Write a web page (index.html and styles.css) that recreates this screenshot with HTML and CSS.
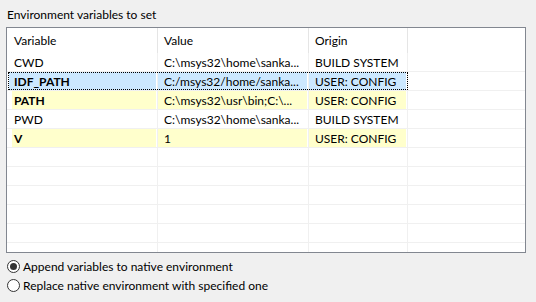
FILE: index.html
```html
<!DOCTYPE html>
<html lang="en">
<head>
    <meta charset="UTF-8">
    <title>Environment</title>
    <link rel="stylesheet" href="styles.css">
</head>
<body>
    <div class="panel">
        <div class="caption">Environment variables to set</div>
        <div class="env-table">
            <div class="row head">
                <div class="cell">Variable</div>
                <div class="cell">Value</div>
                <div class="cell">Origin</div>
                <div class="cell"></div>
            </div>
            <div class="row">
                <div class="cell">CWD</div>
                <div class="cell">C:\msys32\home\sanka...</div>
                <div class="cell">BUILD SYSTEM</div>
                <div class="cell"></div>
            </div>
            <div class="row sel">
                <div class="cell name">IDF_PATH</div>
                <div class="cell">C:/msys32/home/sanka...</div>
                <div class="cell">USER: CONFIG</div>
                <div class="cell"></div>
                <div class="focus"></div>
            </div>
            <div class="row user">
                <div class="cell name">PATH</div>
                <div class="cell">C:\msys32\usr\bin;C:\...</div>
                <div class="cell">USER: CONFIG</div>
                <div class="cell"></div>
            </div>
            <div class="row">
                <div class="cell">PWD</div>
                <div class="cell">C:\msys32\home\sanka...</div>
                <div class="cell">BUILD SYSTEM</div>
                <div class="cell"></div>
            </div>
            <div class="row user">
                <div class="cell name">V</div>
                <div class="cell">1</div>
                <div class="cell">USER: CONFIG</div>
                <div class="cell"></div>
            </div>
            <div class="row"><div class="cell"></div><div class="cell"></div><div class="cell"></div><div class="cell"></div></div>
            <div class="row"><div class="cell"></div><div class="cell"></div><div class="cell"></div><div class="cell"></div></div>
            <div class="row"><div class="cell"></div><div class="cell"></div><div class="cell"></div><div class="cell"></div></div>
            <div class="row"><div class="cell"></div><div class="cell"></div><div class="cell"></div><div class="cell"></div></div>
            <div class="row"><div class="cell"></div><div class="cell"></div><div class="cell"></div><div class="cell"></div></div>
            <div class="row"><div class="cell"></div><div class="cell"></div><div class="cell"></div><div class="cell"></div></div>
        </div>
        <div class="options">
            <label class="radio"><span class="mark checked"></span>Append variables to native environment</label>
            <label class="radio"><span class="mark"></span>Replace native environment with specified one</label>
        </div>
    </div>
</body>
</html>
```

FILE: styles.css
```css
* {
    margin: 0;
    padding: 0;
    box-sizing: border-box;
}

body {
    font-family: 'Lato', 'Noto Sans', sans-serif;
    font-size: 12px;
    background-color: #f0f0f0;
    color: #000;
}

.panel {
    padding: 0 10px 0 6px;
}

.caption {
    padding: 6px 0 0 1px;
    height: 27px;
    line-height: 18px;
}

.env-table {
    border: 1px solid #828790;
    background-color: #fff;
    height: 226px;
    overflow: hidden;
}

.row {
    position: relative;
    display: grid;
    grid-template-columns: 151px 151px 99px 1fr;
    height: 19px;
    border-bottom: 1px solid #f0f0f0;
}

.row.head {
    height: 25px;
    border-bottom: none;
}

.cell {
    padding-left: 6px;
    line-height: 19px;
    white-space: nowrap;
    overflow: hidden;
    border-right: 1px solid #f0f0f0;
}

.row .cell:first-child {
    padding-left: 7px;
}

.row .cell:nth-child(4) {
    border-right: none;
}

.head .cell {
    line-height: 26px;
    border-right-color: #e5e5e5;
}

.name {
    font-weight: bold;
}

.user .cell {
    background-color: #ffffcc;
    box-shadow: inset -1px 0 #fff;
}

.user .cell:first-child {
    box-shadow: inset 5px 0 #fff, inset -1px 0 #fff;
}

.sel .cell {
    background-color: #cce8ff;
    box-shadow: inset -1px 0 #fff;
}

.sel .cell:first-child {
    box-shadow: inset 2px 0 #fff, inset -1px 0 #fff;
}

.user .cell:nth-child(4),
.sel .cell:nth-child(4) {
    background-color: transparent;
    box-shadow: none;
}

.focus {
    position: absolute;
    top: 0;
    left: 1px;
    width: 400px;
    height: 18px;
    border: 1px dotted #000;
}

.options {
    padding-top: 4px;
}

.radio {
    display: flex;
    align-items: center;
    height: 19px;
    padding-left: 1px;
}

.mark {
    width: 13px;
    height: 13px;
    margin-right: 3px;
    border: 1px solid #333;
    border-radius: 50%;
    background-color: #fff;
    display: flex;
    align-items: center;
    justify-content: center;
}

.mark.checked::after {
    content: '';
    width: 7px;
    height: 7px;
    border-radius: 50%;
    background-color: #333;
}
```
